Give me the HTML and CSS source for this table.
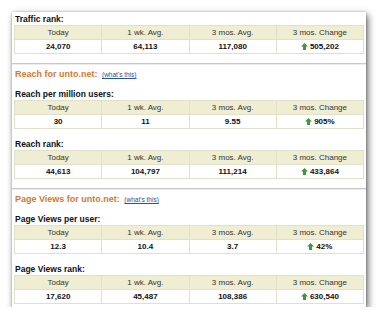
FILE: index.html
```html
<!DOCTYPE html>
<html>
<head>
<meta charset="utf-8">
<link rel="stylesheet" href="styles.css">
</head>
<body>
<div class="card">
  <div class="label">Traffic rank:</div>
  <table class="stats">
    <tr class="head"><td>Today</td><td>1 wk. Avg.</td><td>3 mos. Avg.</td><td>3 mos. Change</td></tr>
    <tr class="data"><td>24,070</td><td>64,113</td><td>117,080</td><td><span class="up"><svg viewBox="0 0 7 7" width="7" height="7"><path d="M3.5 0 L7 3.6 L5 3.6 L5 7 L2 7 L2 3.6 L0 3.6 Z"/></svg></span>505,202</td></tr>
  </table>

  <div class="sep"></div>
  <div class="heading">Reach for unto.net: <a class="what" href="#">(what's this)</a></div>

  <div class="label">Reach per million users:</div>
  <table class="stats">
    <tr class="head"><td>Today</td><td>1 wk. Avg.</td><td>3 mos. Avg.</td><td>3 mos. Change</td></tr>
    <tr class="data"><td>30</td><td>11</td><td>9.55</td><td><span class="up"><svg viewBox="0 0 7 7" width="7" height="7"><path d="M3.5 0 L7 3.6 L5 3.6 L5 7 L2 7 L2 3.6 L0 3.6 Z"/></svg></span>905%</td></tr>
  </table>

  <div class="label gap">Reach rank:</div>
  <table class="stats">
    <tr class="head"><td>Today</td><td>1 wk. Avg.</td><td>3 mos. Avg.</td><td>3 mos. Change</td></tr>
    <tr class="data"><td>44,613</td><td>104,797</td><td>111,214</td><td><span class="up"><svg viewBox="0 0 7 7" width="7" height="7"><path d="M3.5 0 L7 3.6 L5 3.6 L5 7 L2 7 L2 3.6 L0 3.6 Z"/></svg></span>433,864</td></tr>
  </table>

  <div class="sep"></div>
  <div class="heading">Page Views for unto.net: <a class="what" href="#">(what's this)</a></div>

  <div class="label">Page Views per user:</div>
  <table class="stats">
    <tr class="head"><td>Today</td><td>1 wk. Avg.</td><td>3 mos. Avg.</td><td>3 mos. Change</td></tr>
    <tr class="data"><td>12.3</td><td>10.4</td><td>3.7</td><td><span class="up"><svg viewBox="0 0 7 7" width="7" height="7"><path d="M3.5 0 L7 3.6 L5 3.6 L5 7 L2 7 L2 3.6 L0 3.6 Z"/></svg></span>42%</td></tr>
  </table>

  <div class="label gap">Page Views rank:</div>
  <table class="stats">
    <tr class="head"><td>Today</td><td>1 wk. Avg.</td><td>3 mos. Avg.</td><td>3 mos. Change</td></tr>
    <tr class="data"><td>17,620</td><td>45,487</td><td>108,386</td><td><span class="up"><svg viewBox="0 0 7 7" width="7" height="7"><path d="M3.5 0 L7 3.6 L5 3.6 L5 7 L2 7 L2 3.6 L0 3.6 Z"/></svg></span>630,540</td></tr>
  </table>
</div>
</body>
</html>
```

FILE: styles.css
```css
html, body {
  margin: 0;
  padding: 0;
  background: #ffffff;
}
body {
  padding: 12px 0 0 12px;
  font-family: "Liberation Sans", Arial, sans-serif;
  color: #111;
}
.card {
  width: 350px;
  padding: 1px 2px 3px 2px;
  background: #fff;
  box-shadow: 2px 3px 7px rgba(0, 0, 0, 0.6), 0 0 2px rgba(0, 0, 0, 0.25);
}
.label {
  height: 12px;
  line-height: 12px;
  font-size: 8.5px;
  font-weight: bold;
  padding-left: 1px;
  color: #111;
}
.label.gap {
  margin-top: 9px;
}
.stats {
  width: 350px;
  border-collapse: collapse;
  table-layout: fixed;
}
.stats td {
  height: 13px;
  padding: 0;
  border: 1px solid #e1e0cc;
  text-align: center;
  font-size: 8px;
  line-height: 13px;
}
.head td {
  background: #efeed3;
  color: #333;
}
.data td {
  background: #fff;
  font-weight: bold;
  color: #111;
}
.up {
  display: inline-block;
  margin-right: 2px;
  vertical-align: -1px;
}
.up svg {
  display: block;
  fill: #3d9a3a;
}
.sep {
  margin: 9px -2px 0 -2px;
  height: 1px;
  background: #c8c8c8;
  border-bottom: 1px solid #ececec;
}
.heading {
  margin: 3px 0 8px 0;
  height: 12px;
  line-height: 12px;
  padding-left: 1px;
  font-size: 9px;
  font-weight: bold;
  color: #d27a2e;
}
.what {
  font-size: 6.5px;
  font-weight: normal;
  color: #2c4f9e;
  text-decoration: underline;
  margin-left: 2px;
}
```
